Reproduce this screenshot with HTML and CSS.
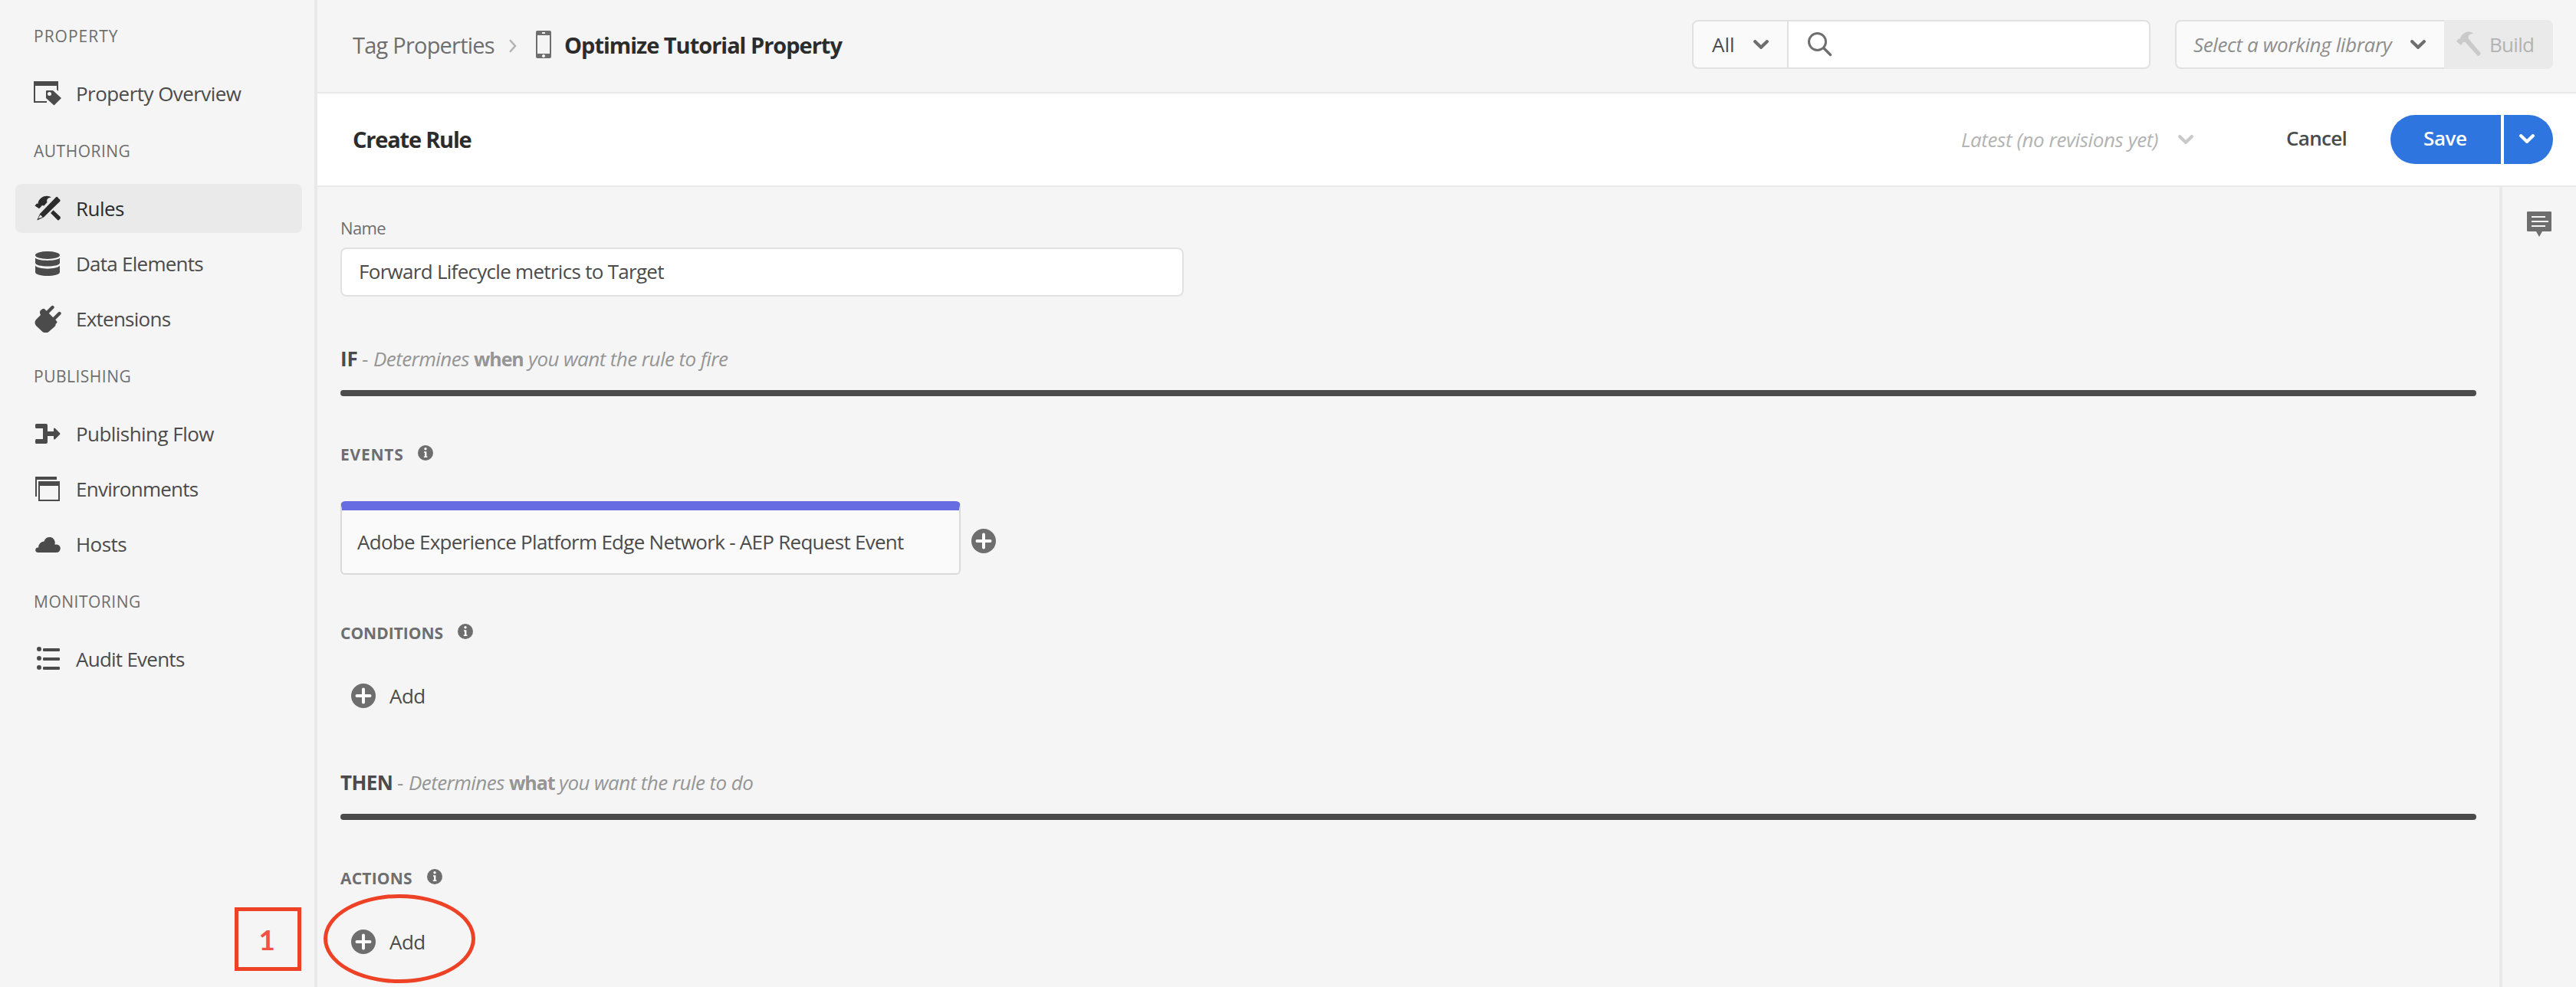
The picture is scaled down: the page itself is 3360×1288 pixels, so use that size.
FILE: index.html
```html
<!DOCTYPE html>
<html lang="en">
<head>
<meta charset="utf-8">
<title>Create Rule</title>
<link rel="stylesheet" href="styles.css">
</head>
<body>
<svg class="defs" aria-hidden="true">
  <symbol id="chevron" viewBox="0 0 20 12"><path d="M2.200 2.200 10 9.800l7.800-7.600" fill="none" stroke="currentColor" stroke-width="4.200" stroke-linecap="round" stroke-linejoin="miter"/></symbol>
  <symbol id="plus" viewBox="0 0 32 32"><circle cx="16" cy="16" r="16" fill="currentColor"/><path d="M16 7.500v17M7.500 16h17" stroke="#fff" stroke-width="4" stroke-linecap="round"/></symbol>
  <symbol id="info" viewBox="0 0 20 20"><circle cx="10" cy="10" r="10" fill="currentColor"/><circle cx="10" cy="4.800" r="1.700" fill="#fff"/><path d="M8 8.200h3.400v6.200H12.400v1.600H7.800v-1.600H9V9.800H8z" fill="#fff"/></symbol>
</svg>
<div class="app">
  <nav class="sidebar">
    <h2 class="nav-heading wide">PROPERTY</h2>
    <a class="nav-item">
      <svg class="nav-icon" viewBox="0 0 36 36"><path fill="currentColor" d="M0 2h32v13l-2-2V8H2v20h15v2H0zM16 15q0-1 1-1h8l11 10-9.500 9.500L16 24z"/><circle cx="20.500" cy="18.500" r="2.500" fill="#f5f5f5"/></svg>
      <span>Property Overview</span></a>
    <h2 class="nav-heading">AUTHORING</h2>
    <a class="nav-item active">
      <svg class="nav-icon" viewBox="0 0 36 36"><g fill="currentColor"><path d="M1.500 14.500 4 11.500 5.500 12 C6 6 11 2 17 1.800 Q21 1.800 23 3.500 C18 4 16.500 6.500 17.500 10 L13.500 14.500 11 14 8 17.200 7 18.200z"/><path d="M30.500 2.800 34.500 7 Q35 8 34 9L13 29.500 4.500 33.500 4.600 32.600 8 25 29 3.300Q30 2.300 30.500 2.800z"/><path d="m22 24 3.500-3.800 9 8.600Q35.500 30 34.500 31.200l-1.600 1.800Q32 34 31 33z"/></g><path d="m5.800 31.300 2.700-5.100 3.100 3z" fill="#eaeaea"/></svg>
      <span>Rules</span></a>
    <a class="nav-item">
      <svg class="nav-icon" viewBox="0 0 36 36"><g fill="currentColor"><ellipse cx="18" cy="7" rx="16" ry="5"/><path d="M2 10.500C5 15 31 15 34 10.500V17c0 6-32 6-32 0z"/><path d="M2 20.500C5 26 31 26 34 20.500V29c0 6.700-32 6.700-32 0z"/></g></svg>
      <span class="tight">Data Elements</span></a>
    <a class="nav-item">
      <svg class="nav-icon" viewBox="0 0 36 36"><g fill="currentColor"><path d="M8.500 7.500Q12 3.500 14.500 5.500L30 21q1.500 2-1.500 4 .5 2-1.500 3.500L19.500 35q-4 3-8 0L3 27q-3-4 0-8l6-6q-1.800-3-.5-5.500z"/></g><path d="m18 9.500 6.500-6.500M26.500 18l7-7" stroke="currentColor" stroke-width="4.400" stroke-linecap="round"/></svg>
      <span class="tight">Extensions</span></a>
    <h2 class="nav-heading">PUBLISHING</h2>
    <a class="nav-item">
      <svg class="nav-icon" viewBox="0 0 36 36"><path fill="currentColor" d="M2 6.500Q2 5 3.500 5H16q2 0 2 2v8h8V12q0-2.500 2-1l6 6q.8 1 0 2l-6 6q-2 1.500-2-1v-3h-8v8q0 2-2 2H3.500Q2 31 2 29.500V26.500Q2 25 3.500 25H12V11H3.500Q2 11 2 9.500z"/></svg>
      <span>Publishing Flow</span></a>
    <a class="nav-item">
      <svg class="nav-icon" viewBox="0 0 36 36"><path fill="currentColor" d="M2 2h28v4H4v22H2zM6 8h28v26H6zm2 6v18h24V14z" fill-rule="evenodd"/></svg>
      <span class="tight">Environments</span></a>
    <a class="nav-item">
      <svg class="nav-icon" viewBox="0 0 36 36"><path fill="currentColor" d="M5 29a3.300 3.300 0 0 1 0-6.500c.5 0 1 0 1.200.2A7.500 7.500 0 0 1 13.500 14.600a7.200 7.200 0 0 1 14.100 3v1.200A5.300 5.300 0 1 1 29 29z"/></svg>
      <span>Hosts</span></a>
    <h2 class="nav-heading">MONITORING</h2>
    <a class="nav-item">
      <svg class="nav-icon" viewBox="0 0 36 36"><g fill="currentColor"><circle cx="7" cy="5" r="3"/><circle cx="7" cy="17" r="3"/><circle cx="7" cy="29" r="3"/><rect x="12" y="4" width="22" height="4" rx="1"/><rect x="12" y="16" width="22" height="4" rx="1"/><rect x="12" y="28" width="22" height="4" rx="1"/></g></svg>
      <span class="tight">Audit Events</span></a>
  </nav>

  <div class="main">
    <header class="topbar">
      <div class="breadcrumb">
        <a class="crumb">Tag Properties</a>
        <svg class="crumb-sep" viewBox="0 0 10 18"><path d="m1.800 2 6.200 7-6.200 7" fill="none" stroke="#b3b3b3" stroke-width="2.600" stroke-linecap="round"/></svg>
        <svg class="phone" viewBox="0 0 20 36"><path fill="#6e6e6e" fill-rule="evenodd" d="M2 0h16q2 0 2 2v32q0 2-2 2H2q-2 0-2-2V2Q0 0 2 0zm0 6v24h16V6zm6-4v2h4V2zm2 29a2 2 0 1 0 .01 0z"/></svg>
        <strong class="crumb-current">Optimize Tutorial Property</strong>
      </div>
      <div class="search">
        <button class="search-scope"><span>All</span><svg class="chevron"><use href="#chevron"/></svg></button>
        <div class="search-field"><svg class="magnifier" viewBox="0 0 32 32"><circle cx="12.500" cy="12.500" r="11" fill="none" stroke="#6e6e6e" stroke-width="3"/><path d="m20.500 20.500 9 9" stroke="#6e6e6e" stroke-width="3.400" stroke-linecap="round"/></svg></div>
      </div>
      <div class="library">
        <button class="library-select"><em>Select a working library</em><svg class="chevron"><use href="#chevron"/></svg></button>
        <button class="build"><svg class="hammer" viewBox="0 0 32 32"><path fill="#cacaca" d="M0 13 3 9.500 4.500 10C6 5 10 1 15 .5q5-.5 7.500 2.200-4.500-.2-6.500 2.800l-.5 3.500L31 27.500q1.200 1.500 0 2.800l-1 1q-1.500 1.200-2.800 0L11.500 14 9 14l-3 4z"/></svg><span>Build</span></button>
      </div>
    </header>

    <div class="titlebar">
      <h1 class="title">Create Rule</h1>
      <div class="revision"><em>Latest (no revisions yet)</em><svg class="chevron"><use href="#chevron"/></svg></div>
      <button class="cancel">Cancel</button>
      <div class="save-group">
        <button class="save">Save</button>
        <button class="save-more"><svg class="chevron"><use href="#chevron"/></svg></button>
      </div>
    </div>

    <div class="content">
      <main class="rule">
        <label class="field-label">Name</label>
        <div class="field">Forward Lifecycle metrics to Target</div>

        <div class="clause"><b class="if">IF</b><span class="dash">-</span><i>Determines</i><b class="key">when</b><i class="rest">you want the rule to fire</i></div>
        <div class="bar"></div>
        <div class="section-title events"><span>EVENTS</span><svg class="info"><use href="#info"/></svg></div>
        <div class="cards">
          <div class="card">Adobe Experience Platform Edge Network - AEP Request Event</div>
          <svg class="plus"><use href="#plus"/></svg>
        </div>
        <div class="section-title conditions"><span>CONDITIONS</span><svg class="info"><use href="#info"/></svg></div>
        <button class="add"><svg class="plus"><use href="#plus"/></svg><span>Add</span></button>

        <div class="clause then"><b class="then-word">THEN</b><span class="dash">-</span><i>Determines</i><b class="key">what</b><i class="rest">you want the rule to do</i></div>
        <div class="bar"></div>
        <div class="section-title"><span>ACTIONS</span><svg class="info"><use href="#info"/></svg></div>
        <button class="add last"><svg class="plus"><use href="#plus"/></svg><span>Add</span></button>
      </main>
      <aside class="rail">
        <svg class="comment" viewBox="0 0 32 34"><path fill="#6e6e6e" d="M1 0h30q1 0 1 1v24q0 1-1 1H20l-4 7-4-7H1q-1 0-1-1V1Q0 0 1 0z"/><path d="M6 7h18M6 13h22M6 19h18" stroke="#f5f5f5" stroke-width="2"/></svg>
      </aside>
    </div>
  </div>
</div>
<div class="step">1</div>
<div class="ring"></div>
</body>
</html>
```
FILE: styles.css
```css
* { box-sizing: border-box; }
body {
  margin: 0;
  width: 3360px;
  height: 1288px;
  overflow: hidden;
  position: relative;
  background: #f5f5f5;
  color: #4b4b4b;
  font: 26px/36px "Open Sans", sans-serif;
  letter-spacing: -0.55px;
}
button {
  margin: 0; padding: 0; border: 0; background: none;
  color: inherit; font: inherit; letter-spacing: inherit;
}
svg { display: block; flex: none; }
.defs { position: absolute; width: 0; height: 0; }
.app { display: flex; height: 1288px; }

/* Sidebar */
.sidebar {
  flex: none;
  width: 414px;
  padding: 4px 16px 0 20px;
  border-right: 4px solid #e9e9e9;
  display: flex;
  flex-direction: column;
}
.nav-heading {
  margin: 0;
  height: 86px;
  padding-left: 24px;
  font-size: 21px;
  font-weight: 400;
  line-height: 86px;
  letter-spacing: 0.5px;
  color: #6e6e6e;
}
.nav-heading.wide { letter-spacing: 1px; }
.nav-item {
  display: flex;
  align-items: center;
  gap: 19px;
  height: 64px;
  padding-left: 24px;
  border-radius: 8px;
}
.nav-item + .nav-item { margin-top: 8px; }
.nav-item.active { background: #eaeaea; color: #2c2c2c; }
.nav-icon { width: 36px; height: 36px; }
.tight { letter-spacing: -0.75px; }

/* Top bar */
.main { flex: 1; min-width: 0; display: flex; flex-direction: column; }
.topbar {
  display: flex;
  align-items: center;
  height: 122px;
  padding: 0 30px 4px 46px;
  border-bottom: 2px solid #e9e9e9;
}
.breadcrumb {
  flex: 1;
  display: flex;
  align-items: center;
  font-size: 29px;
}
.crumb { color: #6e6e6e; letter-spacing: -0.78px; width: 204px; margin-top: 2px; }
.crumb-sep { width: 10px; height: 18px; margin-top: 4px; }
.phone { width: 20px; height: 36px; margin: 0 17px 0 25px; }
.crumb-current { color: #2c2c2c; font-weight: 700; letter-spacing: -1.02px; margin-top: 2px; }
.chevron { width: 20px; height: 12px; color: #6e6e6e; }
.search { display: flex; width: 598px; height: 64px; margin-right: 32px; }
.search-scope {
  display: flex;
  align-items: center;
  justify-content: space-between;
  width: 126px;
  padding: 0 24px 0 24px;
  border: 2px solid #e1e1e1;
  border-radius: 8px 0 0 8px;
  background: #fafafa;
  letter-spacing: 0;
}
.search-field {
  flex: 1;
  display: flex;
  align-items: center;
  padding-left: 25px;
  border: 2px solid #e1e1e1;
  border-left: 0;
  border-radius: 0 8px 8px 0;
  background: #fff;
}
.magnifier { width: 32px; height: 32px; }
.library { display: flex; width: 493px; height: 64px; }
.library-select {
  flex: 1;
  display: flex;
  align-items: center;
  justify-content: space-between;
  padding: 0 24px 0 22px;
  border: 2px solid #e1e1e1;
  border-right: 0;
  border-radius: 8px 0 0 8px;
  background: #fafafa;
  color: #8e8e8e;
  letter-spacing: -0.38px;
}
.build {
  display: flex;
  align-items: center;
  gap: 11px;
  width: 142px;
  padding-left: 16px;
  border-radius: 0 8px 8px 0;
  background: #eaeaea;
  color: #b3b3b3;
  letter-spacing: -0.7px;
}
.hammer { width: 32px; height: 32px; margin-top: -2px; }

/* Title bar */
.titlebar {
  display: flex;
  align-items: center;
  height: 122px;
  padding: 0 30px 0 46px;
  background: #fff;
  border-bottom: 2px solid #e9e9e9;
}
.title {
  flex: 1;
  margin: 0;
  font-size: 29px;
  font-weight: 700;
  letter-spacing: -1.2px;
  color: #2c2c2c;
}
.revision {
  display: flex;
  align-items: center;
  justify-content: space-between;
  width: 303px;
  color: #b3b3b3;
  letter-spacing: -0.4px;
}
.revision .chevron { color: #c9c9c9; }
.cancel {
  width: 80px;
  margin: -4px 56px 0 121px;
  text-align: left;
  font-weight: 600;
  letter-spacing: -0.7px;
}
.save-group { display: flex; gap: 4px; height: 64px; }
.save, .save-more { background: #2f75df; color: #fff; }
.save {
  width: 144px;
  padding: 0 0 4px 43px;
  border-radius: 32px 0 0 32px;
  text-align: left;
  font-weight: 600;
  letter-spacing: -0.4px;
}
.save-more { width: 64px; padding: 0 0 2px 20px; border-radius: 0 32px 32px 0; }
.save-more .chevron { color: #fff; }

/* Rule editor */
.content { flex: 1; display: flex; }
.rule { flex: 1; padding: 36px 30px 0; }
.field-label {
  display: block;
  margin-bottom: 7px;
  font-size: 22px;
  line-height: 35px;
  padding-bottom: 1px;
  letter-spacing: -0.65px;
  color: #6e6e6e;
}
.field {
  width: 1100px;
  height: 64px;
  padding-left: 22px;
  border: 2px solid #e1e1e1;
  border-radius: 8px;
  background: #fff;
  line-height: 58px;
  letter-spacing: -0.71px;
}
.clause {
  display: flex;
  height: 36px;
  margin-top: 63px;
  margin-bottom: 23px;
  color: #959595;
  letter-spacing: -0.57px;
}
.clause b { color: #4b4b4b; }
.clause .key { width: 71px; color: #959595; font-size: 25px; letter-spacing: -1.1px; }
.clause.then .key { width: 65px; }
.clause i { width: 131px; }
.clause .rest { width: auto; }
.clause .if { width: 28px; letter-spacing: 0; }
.then-word { width: 74px; }
.dash { width: 15px; }
.clause.then { margin-top: 77px; }
.bar { height: 8px; border-radius: 4px; background: #4b4b4b; }
.section-title {
  display: flex;
  gap: 19px;
  height: 24px;
  margin-top: 64px;
  font-size: 21px;
  line-height: 24px;
  font-weight: 700;
  letter-spacing: 0.2px;
  color: #6e6e6e;
}
.section-title.events { letter-spacing: 0.75px; }
.section-title.conditions { letter-spacing: 0; }
.info { width: 20px; height: 20px; }
.cards { display: flex; align-items: center; gap: 14px; margin-top: 49px; }
.card {
  width: 809px;
  height: 96px;
  padding-left: 20px;
  border: 2px solid #dadada;
  border-top: 12px solid #676ce3;
  border-radius: 6px;
  background: #fafafa;
  line-height: 82px;
  letter-spacing: -0.72px;
}
.plus { width: 32px; height: 32px; color: #6e6e6e; }
.cards .plus { margin-top: 8px; }
.add {
  display: flex;
  align-items: center;
  gap: 18px;
  height: 36px;
  margin: 52px 0 0 14px;
}
.add.last { margin-top: 53px; }
.rail {
  width: 100px;
  border-left: 4px solid #e9e9e9;
  padding: 32px 0 0 32px;
}
.comment { width: 32px; height: 34px; }

/* Callouts over the page */
.step {
  position: absolute;
  left: 306px;
  top: 1184px;
  width: 87px;
  height: 83px;
  padding-right: 3px;
  border: 5px solid #ed4226;
  color: #f15244;
  font: 700 37px/73px Lato, sans-serif;
  text-align: center;
}
.ring {
  position: absolute;
  left: 422px;
  top: 1167px;
  width: 198px;
  height: 116px;
  border: 5px solid #ed4226;
  border-radius: 50%;
}
```
